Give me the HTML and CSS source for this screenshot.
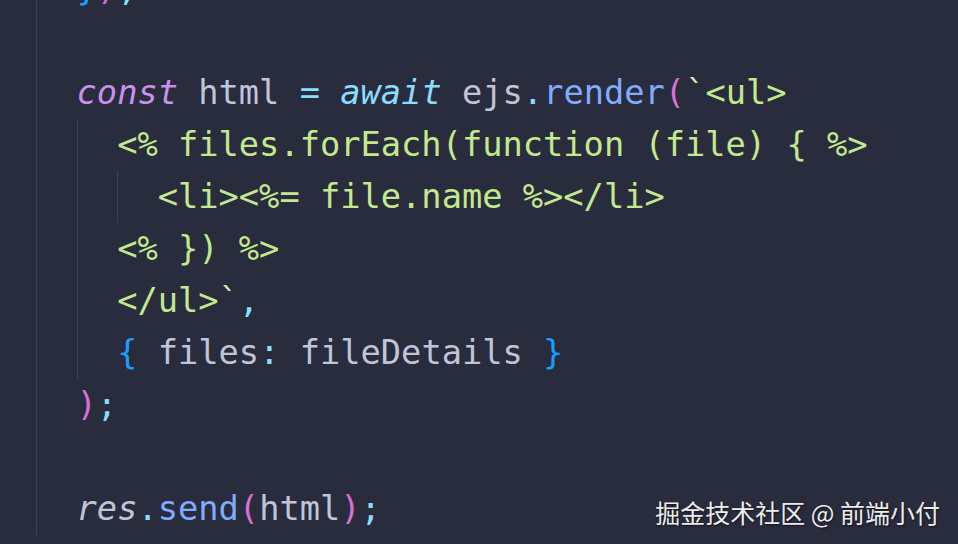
FILE: index.html
```html
<!DOCTYPE html>
<html lang="zh">
<head>
<meta charset="utf-8">
<title>code</title>
<link rel="stylesheet" href="styles.css">
</head>
<body>
<div class="editor">
  <div class="code">
    <div class="line"><span class="ind"></span><span class="t"><span class="bb">}</span><span class="bp">)</span><span class="p">;</span></span></div>
    <div class="line"><span class="ind"></span></div>
    <div class="line"><span class="ind"></span><span class="t"><span class="kw">const</span> html <span class="p">=</span> <span class="aw">await</span> ejs<span class="p">.</span><span class="fn">render</span><span class="bp">(</span><span class="tk">`</span><span class="s">&lt;ul&gt;</span></span></div>
    <div class="line"><span class="ind"></span><span class="ind"></span><span class="t"><span class="s">&lt;% files.forEach(function (file) { %&gt;</span></span></div>
    <div class="line"><span class="ind"></span><span class="ind"></span><span class="ind"></span><span class="t"><span class="s">&lt;li&gt;&lt;%= file.name %&gt;&lt;/li&gt;</span></span></div>
    <div class="line"><span class="ind"></span><span class="ind"></span><span class="t"><span class="s">&lt;% }) %&gt;</span></span></div>
    <div class="line"><span class="ind"></span><span class="ind"></span><span class="t"><span class="s">&lt;/ul&gt;</span><span class="tk">`</span><span class="p">,</span></span></div>
    <div class="line"><span class="ind"></span><span class="ind"></span><span class="t"><span class="bb">{</span> files<span class="p">:</span> fileDetails <span class="bb">}</span></span></div>
    <div class="line"><span class="ind"></span><span class="t"><span class="bp">)</span><span class="p">;</span></span></div>
    <div class="line"><span class="ind"></span></div>
    <div class="line"><span class="ind"></span><span class="t"><span class="it">res</span><span class="p">.</span><span class="fn">send</span><span class="bp">(</span>html<span class="bp">)</span><span class="p">;</span></span></div>
    <div class="line"><span class="t"><span class="bg">}</span><span class="p">)</span><span class="p">;</span></span></div>
  </div>
  <div class="watermark">掘金技术社区 @ 前端小付</div>
</div>
</body>
</html>
```

FILE: styles.css
```css
html, body {
  margin: 0;
  padding: 0;
  background: #292c3d;
  overflow: hidden;
}

.editor {
  position: relative;
  width: 958px;
  height: 544px;
  overflow: hidden;
  background: #292c3d;
}

.code {
  margin-top: -37px;
  padding-left: 36px;
  font-family: "DejaVu Sans Mono", "Liberation Mono", monospace;
  font-size: 33.7px;
  color: #bfc5d8;
}

.line {
  display: flex;
  height: 52px;
  line-height: 52px;
  white-space: pre;
}

.ind {
  flex: 0 0 2ch;
  width: 2ch;
  box-shadow: inset 1px 0 0 #3d4053;
}

.t { display: block; }

.kw { color: #c792ea; font-style: italic; }
.aw { color: #89ddff; font-style: italic; }
.it { font-style: italic; }
.p { color: #89ddff; }
.fn { color: #82aaff; }
.s { color: #c3e88d; }
.tk { color: #d4ecb4; }
.bp { color: #da70d6; }
.bb { color: #179fff; }
.bg { color: #ffd700; }

.watermark {
  position: absolute;
  right: 18px;
  bottom: 16px;
  font-family: "Noto Sans CJK SC", "Noto Sans", sans-serif;
  font-size: 25px;
  line-height: 32px;
  color: #ececec;
  text-shadow: 1px 1px 2px rgba(0, 0, 0, 0.6);
}
```
